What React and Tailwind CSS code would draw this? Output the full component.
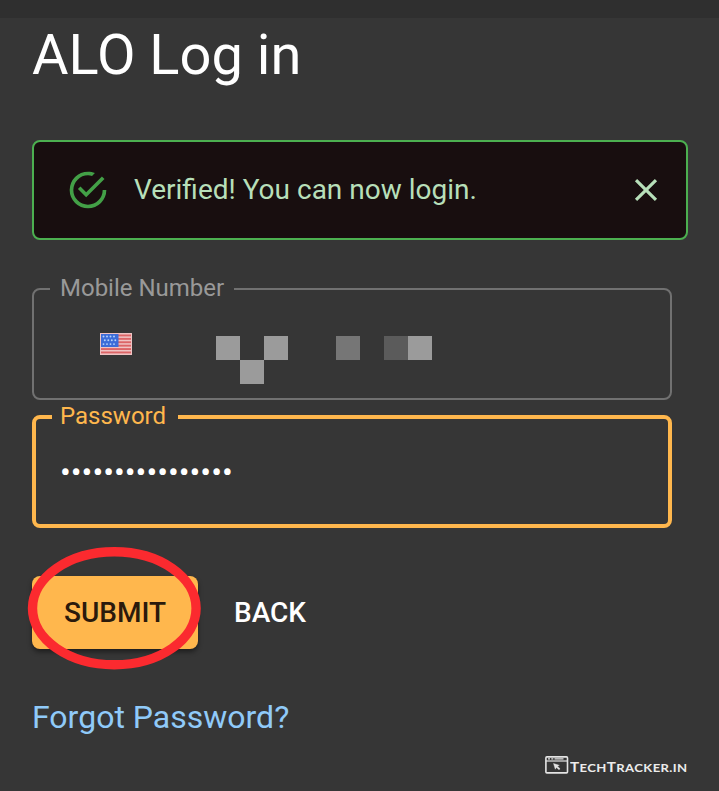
import React from 'react';

const PIXELS = [
  ['#9b9b9b', null, '#9b9b9b', null, null, '#767676', null, '#5b5b5b', '#9b9b9b'],
  [null, '#9b9b9b', null, null, null, null, null, null, null],
];

function Flag() {
  return (
    <svg width="32" height="22" viewBox="0 0 32 22" className="block">
      <rect width="32" height="22" fill="#efc3c3" />
      {[1.5, 4.9, 8.3, 11.7, 15.1, 18.5].map((y) => (
        <rect key={y} x="1" y={y} width="30" height="1.9" fill="#dc6466" />
      ))}
      <rect x="1" y="1" width="17.5" height="13" fill="#3c6cd8" />
      {[3.5, 7.3, 11.1].map((y) =>
        [3.5, 7, 10.5, 14].map((x) => <circle key={`${x}-${y}`} cx={x + (y === 7.3 ? 1.3 : 0)} cy={y} r="0.95" fill="#b5d2fb" />)
      )}
    </svg>
  );
}

function Alert() {
  return (
    <div className="mt-[49px] flex h-[100px] w-[656px] items-center rounded-lg border-2 border-[#4caf50] bg-[#180e0f] pl-[32px] pr-[21px] text-[#b7dfb9]">
      <svg width="44" height="44" viewBox="0 0 24 24" fill="#43a047">
        <path d="M20,12A8,8 0 0,1 12,20A8,8 0 0,1 4,12A8,8 0 0,1 12,4C12.76,4 13.5,4.11 14.2,4.31L15.77,2.74C14.61,2.26 13.34,2 12,2A10,10 0 0,0 2,12A10,10 0 0,0 12,22A10,10 0 0,0 22,12M7.91,10.08L6.5,11.5L11,16L21,6L19.59,4.58L11,13.17L7.91,10.08Z" />
      </svg>
      <span className="ml-[24px] grow text-[28px] leading-10">Verified! You can now login.</span>
      <svg width="38" height="38" viewBox="0 0 24 24" fill="currentColor">
        <path d="M19 6.41L17.59 5 12 10.59 6.41 5 5 6.41 10.59 12 5 17.59 6.41 19 12 13.41 17.59 19 19 17.59 13.41 12z" />
      </svg>
    </div>
  );
}

export default function App() {
  return (
    <div className="flex h-[791px] w-[719px] flex-col overflow-hidden bg-[#363636] font-['Roboto',sans-serif] text-white">
      <div className="h-[18px] shrink-0 bg-[#2f2f2f]" />
      <main className="flex flex-col items-start pl-8">
        <h1 className="mt-px h-[72px] text-[56px] leading-[72px]">ALO Log in</h1>
        <Alert />

        <div className="relative mt-12 h-[112px] w-[640px] rounded-lg border-2 border-[#717171]">
          <span className="absolute -top-[18px] left-[16px] w-[184px] bg-[#363636] pl-[10px] text-[24px] leading-[32px] whitespace-nowrap text-[#999999]">
            Mobile Number
          </span>
          <div className="flex items-start pl-[66px] pt-[43px]">
            <Flag />
            <div className="ml-[84px] mt-[3px] grid grid-cols-[repeat(9,24px)] grid-rows-[24px_24px]">
              {PIXELS.flat().map((color, i) => (
                <div key={i} style={{ backgroundColor: color || 'transparent' }} />
              ))}
            </div>
          </div>
        </div>

        <div className="relative mt-[15px] h-[113px] w-[640px] rounded-lg border-4 border-[#ffb74d]">
          <span className="absolute -top-[19px] left-[16px] w-[126px] bg-[#363636] pl-[8px] text-[24px] leading-[32px] whitespace-nowrap text-[#ffb74d]">
            Password
          </span>
          <div className="pl-[24px] pt-[34px] text-[32px] leading-[38px]">••••••••••••••••</div>
        </div>

        <div className="mt-12 flex">
          <div className="relative">
            <button className="block h-[73px] w-[166px] rounded-lg bg-[#ffb74d] text-[28px] font-medium text-[#2b1a0c] shadow-[0_3px_5px_rgba(0,0,0,0.45)]">
              SUBMIT
            </button>
            <svg className="absolute -left-[8px] -top-[33px]" width="180" height="130" viewBox="0 0 180 130">
              <ellipse cx="90.3" cy="65.3" rx="81.8" ry="56.5" fill="none" stroke="#fb2a2f" strokeWidth="9.4" />
            </svg>
          </div>
          <button className="ml-5 h-[73px] px-4 text-[28px] font-medium">BACK</button>
        </div>

        <a className="mt-[44px] text-[32px] leading-[48px] text-[#90caf9]">Forgot Password?</a>
      </main>

      <footer className="mt-[15px] flex items-start self-end pr-[30px]">
        <svg width="24" height="18" viewBox="0 0 24 18" fill="none" stroke="#e4e4e4">
          <rect x="0.9" y="0.9" width="21.6" height="16" rx="1" strokeWidth="1.6" />
          <path d="M1 5h21.5" strokeWidth="1.2" />
          <path d="M3 2.8h2M6.3 2.8h2M9.5 2.8h9" strokeWidth="1.3" />
          <path d="M8.5 7.5l5.8 1.8-1.8 1 2.6 2.5-1.1 1-2.6-2.4-1.1 1.8z" fill="#e4e4e4" strokeWidth="0.4" />
        </svg>
        <span className="mt-[1px] ml-[1px] w-[119px] origin-left scale-x-[1.09] text-[14px] leading-[20px] font-bold tracking-[0.35px] whitespace-nowrap text-[#ececec] [font-family:Lato,sans-serif]">
          T<span className="text-[12px]">ECH</span>T<span className="text-[12px]">RACKER.IN</span>
        </span>
      </footer>
    </div>
  );
}
